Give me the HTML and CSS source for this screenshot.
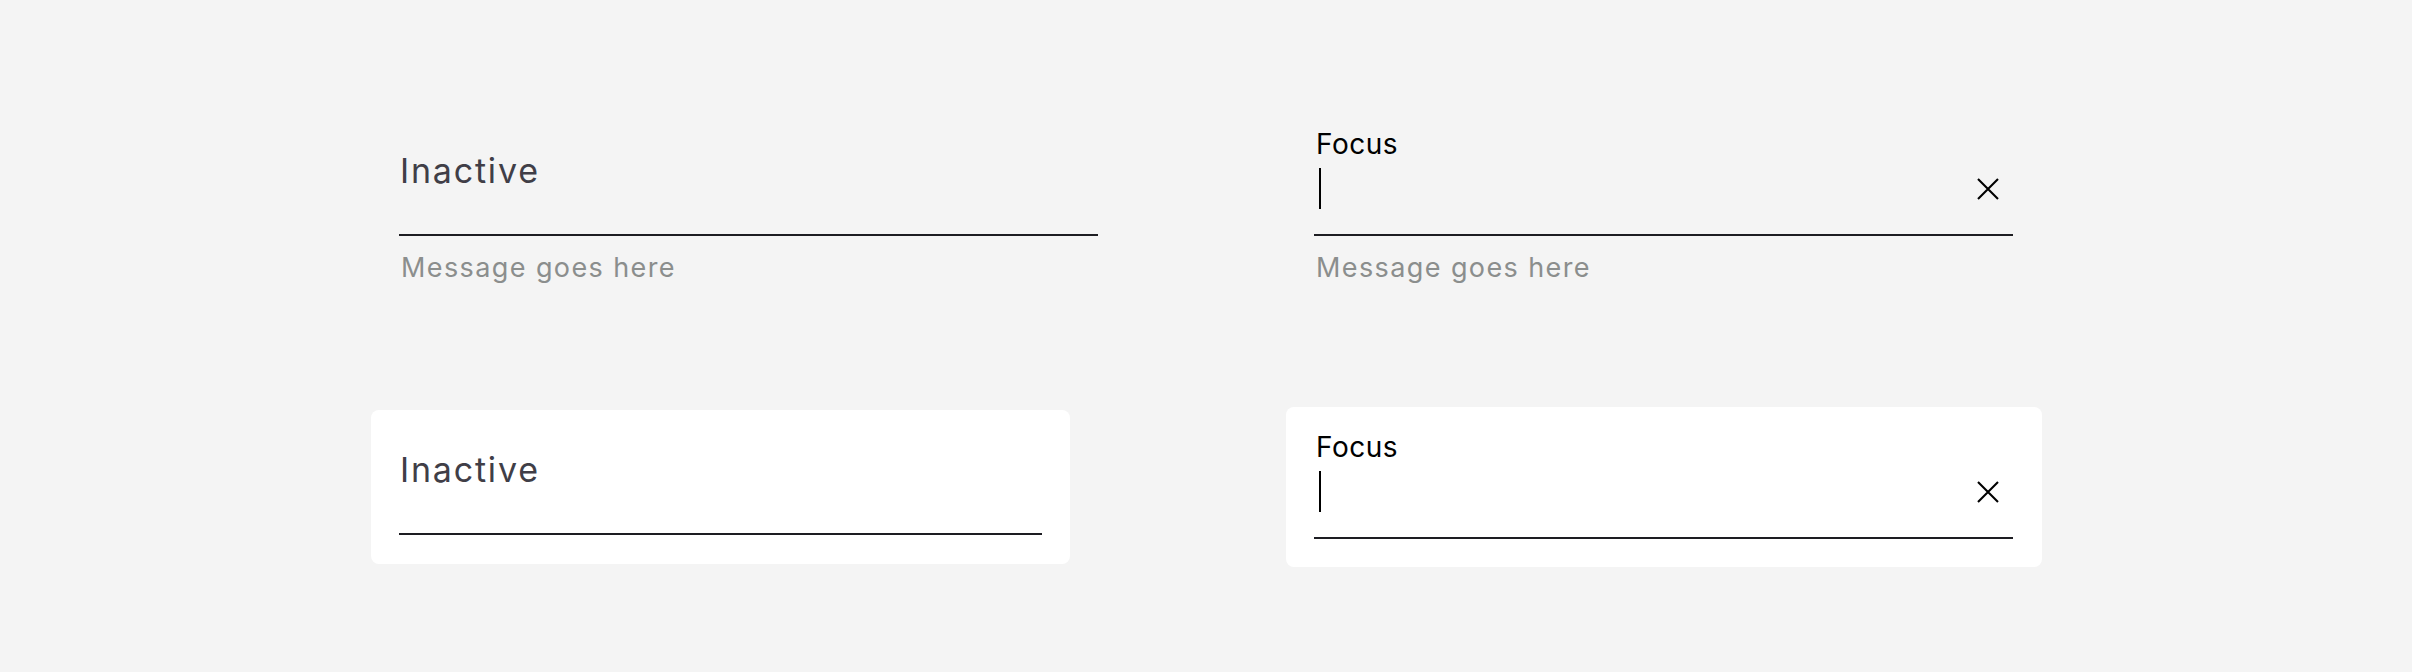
FILE: index.html
```html
<!DOCTYPE html>
<html lang="en">
<head>
<meta charset="utf-8">
<title>Text fields</title>
<link rel="stylesheet" href="styles.css">
</head>
<body>
<main class="board">
  <div class="cell cell-bottom">
    <div class="field field-plain">
      <div class="field-box inactive">
        <span class="label-inactive">Inactive</span>
      </div>
      <p class="message">Message goes here</p>
    </div>
  </div>
  <div class="cell cell-bottom">
    <div class="field field-plain">
      <div class="field-box focus">
        <span class="label-focus">Focus</span>
        <div class="input-row">
          <span class="caret"></span>
          <svg class="clear" width="22" height="22" viewBox="0 0 22 22" aria-hidden="true"><path d="M1 1 L21 21 M21 1 L1 21" stroke="#000" stroke-width="2.1" fill="none"/></svg>
        </div>
      </div>
      <p class="message">Message goes here</p>
    </div>
  </div>
  <div class="cell cell-center">
    <div class="card card-inactive">
      <div class="field-box inactive card-inactive-box">
        <span class="label-inactive">Inactive</span>
      </div>
    </div>
  </div>
  <div class="cell cell-center">
    <div class="card card-focus">
      <div class="field-box focus">
        <span class="label-focus">Focus</span>
        <div class="input-row">
          <span class="caret"></span>
          <svg class="clear" width="22" height="22" viewBox="0 0 22 22" aria-hidden="true"><path d="M1 1 L21 21 M21 1 L1 21" stroke="#000" stroke-width="2.1" fill="none"/></svg>
        </div>
      </div>
    </div>
  </div>
</main>
</body>
</html>
```

FILE: styles.css
```css
* { box-sizing: border-box; }
html, body {
  margin: 0;
  padding: 0;
  background: #f4f4f4;
  font-family: Inter, "Open Sans", "Liberation Sans", sans-serif;
}
.board {
  display: grid;
  grid-template-columns: 756px 756px;
  column-gap: 159px;
  row-gap: 119px;
  padding: 130px 0 0 371px;
}
.cell { display: flex; }
.cell-bottom { align-items: flex-end; }
.cell-center { align-items: center; }

.field-plain {
  width: 699px;
  margin-left: 28px;
}
.field-box {
  display: flex;
  flex-direction: column;
  border-bottom: 2px solid #1d1d22;
}
.field-box.inactive { padding-bottom: 39px; }
.field-box.focus { padding-bottom: 25px; }

.label-inactive {
  display: block;
  font-size: 34px;
  line-height: 48px;
  color: #403e47;
  letter-spacing: 1.8px;
  padding-left: 1px;
}
.label-focus {
  display: block;
  font-size: 28px;
  line-height: 28px;
  color: #000;
  letter-spacing: 0.5px;
  padding-left: 2px;
}
.input-row {
  display: flex;
  align-items: center;
  justify-content: space-between;
  margin-top: 10px;
  height: 41px;
  padding: 0 14px 0 5px;
}
.caret {
  display: block;
  width: 2px;
  height: 41px;
  background: #000;
}
.clear { display: block; }

.message {
  margin: 12px 0 0 0;
  padding-left: 2px;
  font-size: 27px;
  line-height: 40px;
  color: #8b8e8d;
  letter-spacing: 1.4px;
}

.card {
  background: #ffffff;
  border-radius: 8px;
}
.card-inactive {
  width: 699px;
  padding: 36px 28px 29px 28px;
}
.card-inactive-box { padding-bottom: 35px; }
.card-focus {
  width: 756px;
  padding: 26px 29px 28px 28px;
}
```
